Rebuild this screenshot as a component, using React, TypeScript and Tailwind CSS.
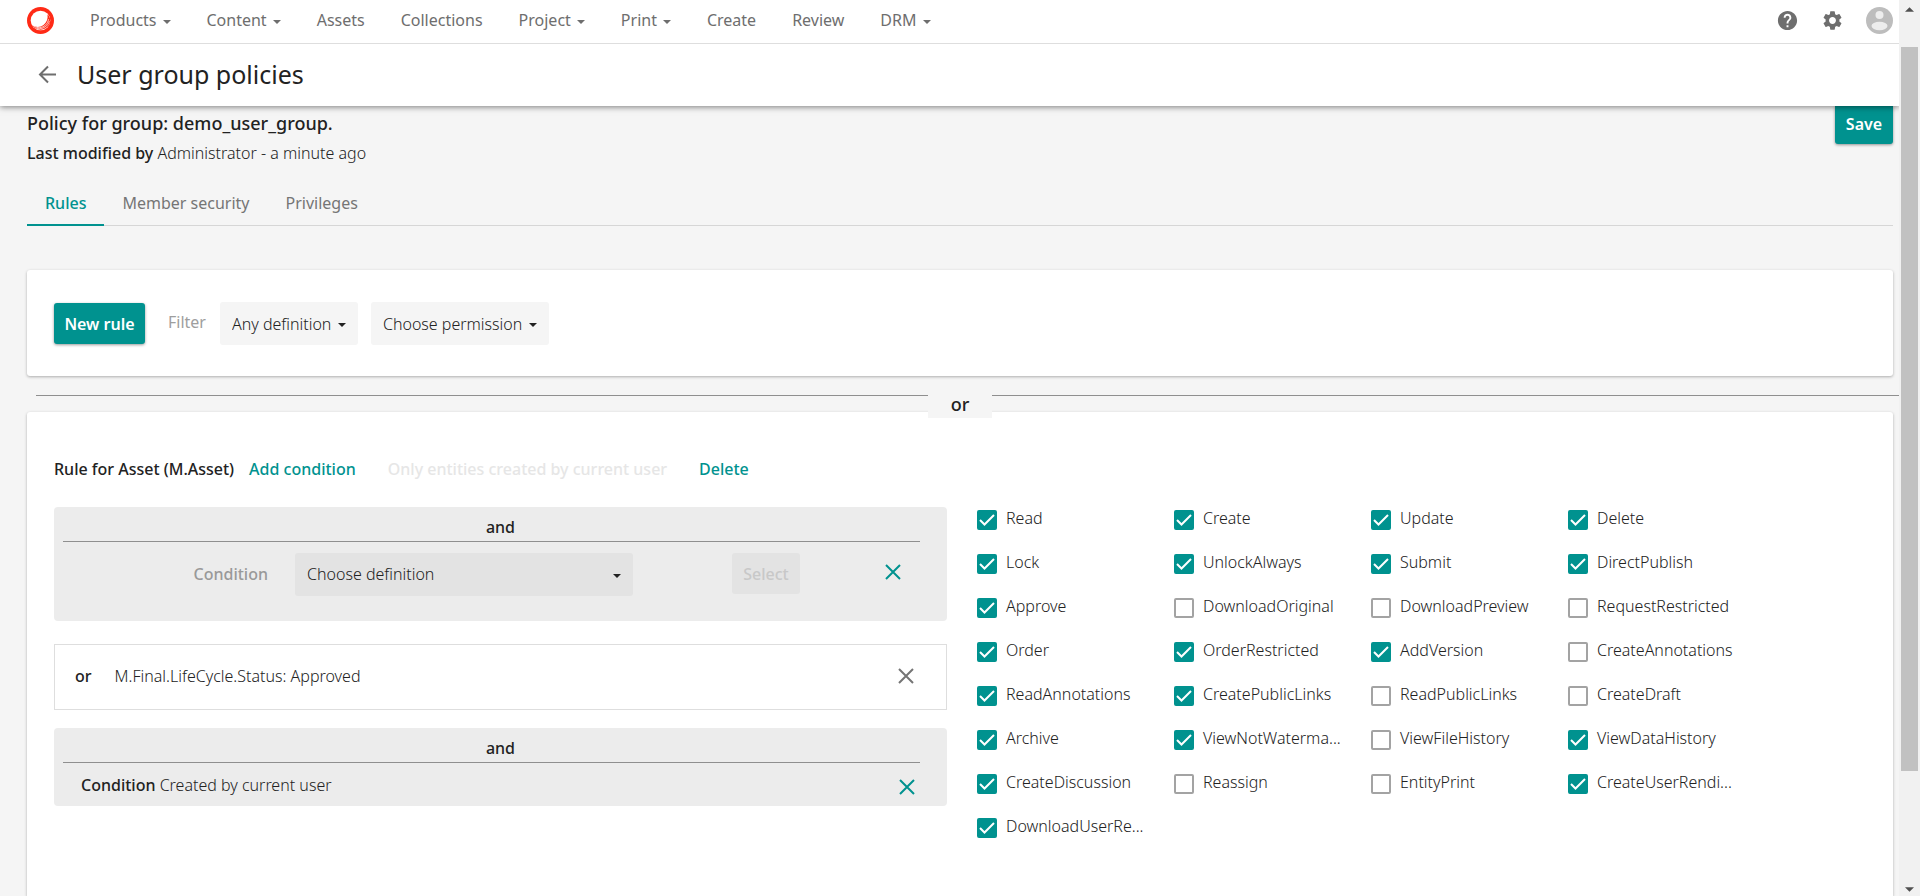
import { MdHelp, MdSettings } from 'react-icons/md';

const navItems = [
  { label: 'Products', menu: true },
  { label: 'Content', menu: true },
  { label: 'Assets' },
  { label: 'Collections' },
  { label: 'Project', menu: true },
  { label: 'Print', menu: true },
  { label: 'Create' },
  { label: 'Review' },
  { label: 'DRM', menu: true },
];

const permissions: [string, boolean][] = [
  ['Read', true], ['Create', true], ['Update', true], ['Delete', true],
  ['Lock', true], ['UnlockAlways', true], ['Submit', true], ['DirectPublish', true],
  ['Approve', true], ['DownloadOriginal', false], ['DownloadPreview', false], ['RequestRestricted', false],
  ['Order', true], ['OrderRestricted', true], ['AddVersion', true], ['CreateAnnotations', false],
  ['ReadAnnotations', true], ['CreatePublicLinks', true], ['ReadPublicLinks', false], ['CreateDraft', false],
  ['Archive', true], ['ViewNotWaterma...', true], ['ViewFileHistory', false], ['ViewDataHistory', true],
  ['CreateDiscussion', true], ['Reassign', false], ['EntityPrint', false], ['CreateUserRendi...', true],
  ['DownloadUserRe...', true],
];

function Caret({ className = '' }: { className?: string }) {
  return (
    <svg className={className} width="8" height="4" viewBox="0 0 8 4" fill="currentColor" aria-hidden="true">
      <path d="M0 0h8L4 4z" />
    </svg>
  );
}

function Cross() {
  return (
    <svg width="16" height="16" viewBox="0 0 16 16" fill="none" stroke="currentColor" strokeWidth="2" aria-hidden="true">
      <path d="M1 1l14 14M15 1L1 15" />
    </svg>
  );
}

function Logo() {
  return (
    <svg width="27" height="27" viewBox="0 0 27 27" aria-hidden="true">
      <circle cx="13.5" cy="13.5" r="13.5" fill="#ff2a16" />
      <circle cx="13.5" cy="13.5" r="9.8" fill="#fff" />
      <path d="M20.5 7.5c2.600 2 3.700 6 2 9.600-2 4.300-7 6.700-12 5.200-2.500-.8-4-2-5.200-3.800 3.500 2 8.200 2 11.200-.5 3.400-2.700 4.600-6.500 4-10.500z" fill="#ff2a16" />
      <path d="M6.500 19.200c4 2.300 8.600 1.800 11.800-1 1.900-1.700 2.900-3.700 3.200-6M9.500 21.500c3.800.8 7.300-.2 10-2.600 1.500-1.400 2.400-3 2.800-4.700" fill="none" stroke="#fff" strokeWidth=".7" />
    </svg>
  );
}

function Select({ label, text, className, caretClass }: { label: string; text: string; className: string; caretClass: string }) {
  return (
    <div className="relative">
      <select aria-label={label} className={`h-[43px] appearance-none rounded-[3px] font-light text-[#222] outline-none ${className}`}>
        <option>{text}</option>
      </select>
      <Caret className={`pointer-events-none absolute top-[21px] text-[#222] ${caretClass}`} />
    </div>
  );
}

function Permission({ name, checked }: { name: string; checked: boolean }) {
  return (
    <label className="flex h-11 w-[197px] items-start">
      <span className="relative mt-1 mr-[9px] h-5 w-5 shrink-0">
        <input
          type="checkbox"
          defaultChecked={checked}
          className="peer block h-5 w-5 appearance-none rounded-[2px] border-2 border-[#a3a3a3] bg-white checked:border-[#00928f] checked:bg-[#00928f]"
        />
        <svg className="pointer-events-none absolute top-0 left-0 hidden peer-checked:block" width="20" height="20" viewBox="0 0 20 20" fill="none" stroke="#fff" strokeWidth="2">
          <path d="M3 10l4.500 4.500L17 5" />
        </svg>
      </span>
      <span className="font-light whitespace-nowrap">{name}</span>
    </label>
  );
}

function Header() {
  return (
    <header className="relative z-20 bg-white shadow-[0_1px_6px_rgba(0,0,0,0.5)]">
      <div className="flex h-11 items-center border-b border-[#dedede] pr-1.5 pb-0.5 pl-[27px]">
        <a href="#home" aria-label="Home">
          <Logo />
        </a>
        <nav className="flex flex-1 pb-0.5 pl-[18px] text-[#6e6e6e]">
          {navItems.map((item) => (
            <a key={item.label} href="#nav" className="flex items-center px-[18px]">
              {item.label}
              {item.menu && <Caret className="mt-1 ml-1.5" />}
            </a>
          ))}
        </nav>
        <div className="flex items-center text-[#6e6e6e]">
          <button aria-label="Help" className="mr-[22px]"><MdHelp size={23} /></button>
          <button aria-label="Settings" className="mr-[22px]"><MdSettings size={23} /></button>
          <button aria-label="Account">
            <svg width="27" height="27" viewBox="0 0 27 27" aria-hidden="true">
              <circle cx="13.500" cy="13.500" r="13.500" fill="#bdbdbd" />
              <circle cx="13.500" cy="8" r="4" fill="#ededed" />
              <ellipse cx="13.500" cy="19" rx="8" ry="4.200" fill="#ededed" />
            </svg>
          </button>
        </div>
      </div>
      <div className="flex h-[62px] items-center pb-0.5 pl-9">
        <button aria-label="Back" className="mr-5 text-[#6e6e6e]">
          <svg width="21" height="21" viewBox="0 0 21 21" fill="none" stroke="currentColor" strokeWidth="2" aria-hidden="true">
            <path d="M20 10.500H4M12 2.500l-8 8 8 8" />
          </svg>
        </button>
        <h1 className="text-[25px] text-[#222]">User group policies</h1>
      </div>
    </header>
  );
}

function AndLine() {
  return (
    <div className="mr-[27px] ml-[9px] border-b border-[#8f8f8f] pt-2 pb-0.5 pl-[18px] text-center font-medium">and</div>
  );
}

function RuleCard() {
  return (
    <section className="flex-1 rounded-t-[3px] bg-white pt-[45px] pl-[27px] shadow-[0_1px_3px_rgba(0,0,0,0.3)]">
      <div className="flex items-center">
        <h2 className="font-medium">Rule for Asset (M.Asset)</h2>
        <button className="ml-[15px] font-medium text-[#00928f]">Add condition</button>
        <button disabled className="ml-8 font-medium text-[#e6e6e6]">Only entities created by current user</button>
        <button className="ml-8 font-medium text-[#00928f]">Delete</button>
      </div>
      <div className="mt-[26px] flex">
        <div className="w-[893px] shrink-0">
          <div className="h-[114px] rounded-[4px] bg-[#ececec]">
            <AndLine />
            <div className="mt-[11px] flex items-start">
              <span className="w-[241px] pt-[9px] pr-[27px] text-right font-medium text-[#999]">Condition</span>
              <Select label="Condition" text="Choose definition" className="w-[338px] bg-[#e3e3e3] pb-0.5 pl-3" caretClass="right-3" />
              <button disabled className="ml-[99px] h-[41px] w-[68px] rounded-[3px] bg-[#e3e3e3] font-medium text-[#c8c8c8]">Select</button>
              <button aria-label="Remove condition" className="mt-[11px] ml-[85px] text-[#00928f]"><Cross /></button>
            </div>
          </div>
          <div className="mt-[23px] flex h-[66px] items-center border border-[#dedede] pr-8 pb-0.5 pl-5">
            <span className="mr-[23px] font-medium">or</span>
            <span className="flex-1 font-light">M.Final.LifeCycle.Status: Approved</span>
            <button aria-label="Remove" className="text-[#757575]"><Cross /></button>
          </div>
          <div className="mt-[18px] h-[78px] rounded-[4px] bg-[#ececec]">
            <AndLine />
            <div className="flex items-start pt-[10px] pr-8 pl-[27px]">
              <p className="flex-1 font-light"><span className="font-medium">Condition</span> Created by current user</p>
              <button aria-label="Remove condition" className="mt-1.5 text-[#00928f]"><Cross /></button>
            </div>
          </div>
        </div>
        <div className="-mt-px ml-[30px] flex w-[788px] flex-wrap content-start">
          {permissions.map(([name, checked]) => (
            <Permission key={name} name={name} checked={checked} />
          ))}
        </div>
      </div>
    </section>
  );
}

function Scrollbar() {
  return (
    <div className="relative z-30 flex w-[21px] shrink-0 flex-col items-center bg-[#f1f1f1] text-[#505050]" aria-hidden="true">
      <div className="flex h-[47px] w-full justify-center pt-[7px]"><Caret className="h-[5px] w-[9px] rotate-180" /></div>
      <div className="w-[17px] flex-1 bg-[#c1c1c1]" />
      <div className="flex h-[14%] w-full items-end justify-center pb-1"><Caret className="h-[5px] w-[9px]" /></div>
    </div>
  );
}

export default function App() {
  return (
    <div className="flex h-screen overflow-hidden bg-[#f5f5f5] font-['Noto_Sans',sans-serif] text-base leading-6 text-[#222]">
      <div className="flex min-w-0 flex-1 flex-col">
        <Header />
        <main className="flex flex-1 flex-col pr-1.5 pl-[27px]">
          <div className="flex items-start justify-between">
            <div className="pt-[5px]">
              <p className="text-lg leading-6 font-medium">Policy for group: demo_user_group.</p>
              <p className="mt-1.5 font-light"><span className="font-medium">Last modified by</span> Administrator - a minute ago</p>
            </div>
            <button className="h-[38px] w-[58px] rounded-b-[3px] bg-[#00928f] pb-0.5 font-semibold text-white shadow-[0_1px_3px_rgba(0,0,0,0.4)]">Save</button>
          </div>
          <div role="tablist" className="mt-[25px] flex h-[36px] border-b border-[#d6d6d6] text-[#757575]">
            <button role="tab" aria-selected="true" className="h-[36px] border-b-2 border-[#00928f] px-[18px] pb-2 font-medium text-[#00928f]">Rules</button>
            <button role="tab" aria-selected="false" className="h-[36px] px-[18px] pb-2.5">Member security</button>
            <button role="tab" aria-selected="false" className="h-[36px] px-[18px] pb-2.5">Privileges</button>
          </div>
          <section className="mt-11 flex h-[106px] shrink-0 items-center rounded-[3px] bg-white px-[27px] shadow-[0_1px_3px_rgba(0,0,0,0.3)]">
            <button className="h-[41px] w-[91px] rounded-[3px] bg-[#00928f] pt-px font-semibold text-white shadow-[0_1px_3px_rgba(0,0,0,0.4)]">New rule</button>
            <span className="mr-3.5 ml-[23px] pb-0.5 text-[#9e9e9e]">Filter</span>
            <Select label="Definition filter" text="Any definition" className="w-[138px] bg-[#f5f5f5] pt-0.5 pl-3" caretClass="right-3" />
            <div className="w-[13px]" />
            <Select label="Permission filter" text="Choose permission" className="w-[178px] bg-[#f5f5f5] pt-0.5 pl-3" caretClass="right-3" />
          </section>
          <div className="relative z-10 mt-[13px] -mb-1.5 grid h-[29px] grid-cols-[1fr_64px_1fr]">
            <div className="mt-1.5 ml-[9px] border-t border-[#8f8f8f]" />
            <div className="bg-[#f5f5f5] pt-[3px] text-center text-lg leading-6 font-medium">or</div>
            <div className="mt-1.5 -mr-1.5 border-t border-[#8f8f8f]" />
          </div>
          <RuleCard />
        </main>
      </div>
      <Scrollbar />
    </div>
  );
}
